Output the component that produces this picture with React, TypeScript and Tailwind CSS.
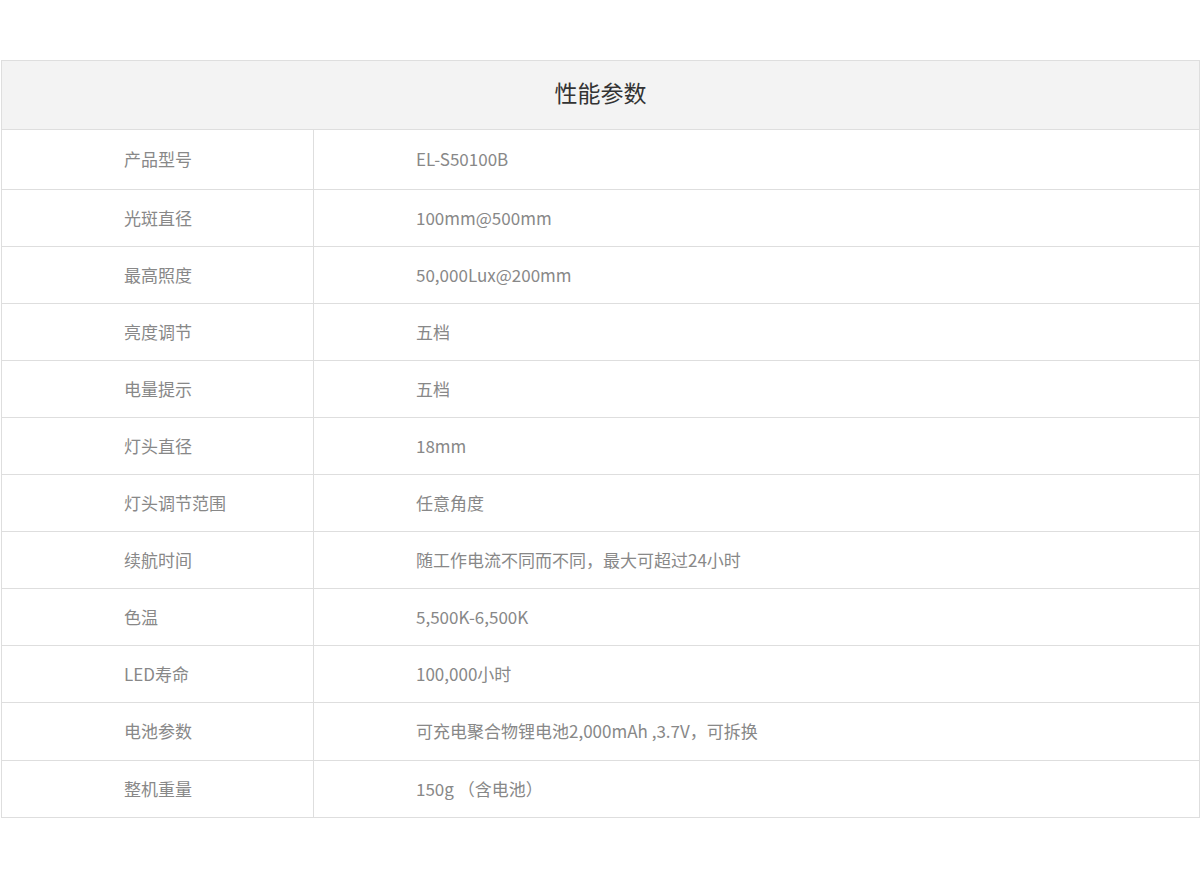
const specs: [string, string][] = [
  ["产品型号", "EL-S50100B"],
  ["光斑直径", "100mm@500mm"],
  ["最高照度", "50,000Lux@200mm"],
  ["亮度调节", "五档"],
  ["电量提示", "五档"],
  ["灯头直径", "18mm"],
  ["灯头调节范围", "任意角度"],
  ["续航时间", "随工作电流不同而不同，最大可超过24小时"],
  ["色温", "5,500K-6,500K"],
  ["LED寿命", "100,000小时"],
  ["电池参数", "可充电聚合物锂电池2,000mAh ,3.7V，可拆换"],
  ["整机重量", "150g （含电池）"],
];

export default function App() {
  return (
    <div
      className="min-h-[878px] bg-white pt-[60px]"
      style={{ fontFamily: '"Microsoft YaHei", "Noto Sans CJK SC", sans-serif' }}
    >
      <div className="ml-px w-[1199px] border border-[#dedede]">
        {/* Header */}
        <div className="flex h-[68px] items-center justify-center bg-[#f3f3f3] pb-[6px] text-[23px] text-[#333]">
          性能参数
        </div>

        {/* Rows */}
        {specs.map(([label, value], i) => (
          <div
            key={label}
            className={`flex border-t border-[#dedede] text-[17px] text-[#888] ${
              i === 0 ? "h-[60px]" : i === 10 ? "h-[58px]" : "h-[57px]"
            }`}
          >
            <div className="flex w-[312px] items-center border-r border-[#dedede] pb-px pl-[122px]">
              {label}
            </div>
            <div className="flex flex-1 items-center pb-px pl-[102px]">
              {value}
            </div>
          </div>
        ))}
      </div>
    </div>
  );
}
